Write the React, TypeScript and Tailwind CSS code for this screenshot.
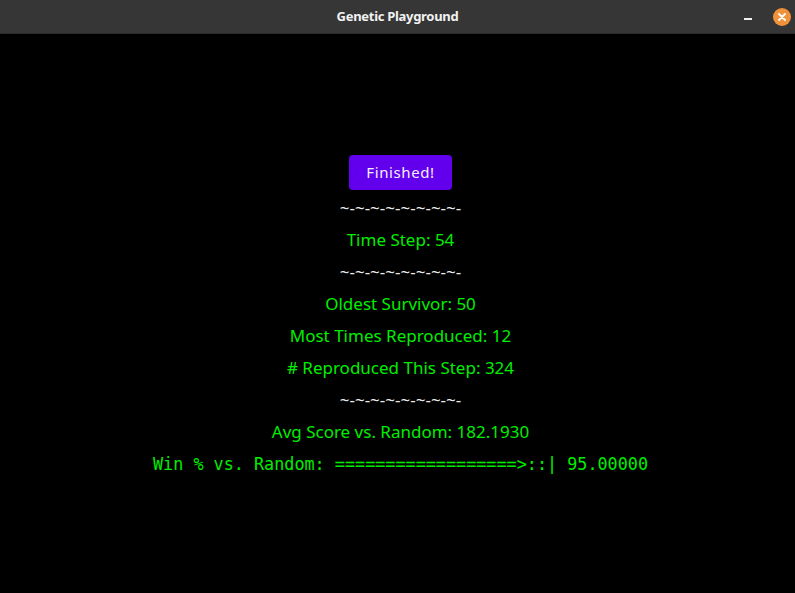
import React from 'react';

const sans = { fontFamily: '"Noto Sans", "Open Sans", sans-serif' };
const mono = { fontFamily: '"DejaVu Sans Mono", "Liberation Mono", monospace' };

function TitleBar() {
  return (
    <div className="relative flex h-[34px] items-center justify-center border-b border-[#2a2a2a] bg-[#363636]">
      <span className="text-[13px] font-bold tracking-[-0.3px] text-[#f2f2f2]" style={sans}>
        Genetic Playground
      </span>
      <div className="absolute right-[4px] top-0 flex h-full items-center gap-[21px]">
        <div className="mt-[4px] h-[2px] w-[8px] bg-[#f0f0f0]" />
        <div className="flex h-[18px] w-[18px] items-center justify-center rounded-full bg-[#f0923a]">
          <svg width="8" height="8" viewBox="0 0 8 8">
            <path d="M1 1 L7 7 M7 1 L1 7" stroke="#ffffff" strokeWidth="1.8" strokeLinecap="round" />
          </svg>
        </div>
      </div>
    </div>
  );
}

function Separator() {
  return (
    <div className="h-8 leading-8 text-[17px] text-[#e8e8e8]" style={sans}>
      ~-~-~-~-~-~-~-~-
    </div>
  );
}

function Stat({ children }: { children: React.ReactNode }) {
  return (
    <div className="h-8 leading-8 text-[17px] text-[#00ee00]" style={sans}>
      {children}
    </div>
  );
}

export default function App() {
  return (
    <div className="flex h-[593px] w-[795px] flex-col bg-black">
      <TitleBar />
      <div className="flex flex-1 flex-col items-center pl-[6px] pt-[121px] text-center">
        <button
          className="mb-[2px] h-[35px] w-[103px] rounded-[4px] bg-[#6200ee] text-[15px] font-normal tracking-[0.6px] text-[#f4f0ff]"
          style={sans}
        >
          Finished!
        </button>
        <Separator />
        <Stat>Time Step: 54</Stat>
        <Separator />
        <Stat>Oldest Survivor: 50</Stat>
        <Stat>Most Times Reproduced: 12</Stat>
        <Stat># Reproduced This Step: 324</Stat>
        <Separator />
        <Stat>Avg Score vs. Random: 182.1930</Stat>
        <div className="h-8 whitespace-pre leading-8 text-[16.8px] text-[#00ee00]" style={mono}>
          Win % vs. Random: ==================&gt;::| 95.00000
        </div>
      </div>
    </div>
  );
}
